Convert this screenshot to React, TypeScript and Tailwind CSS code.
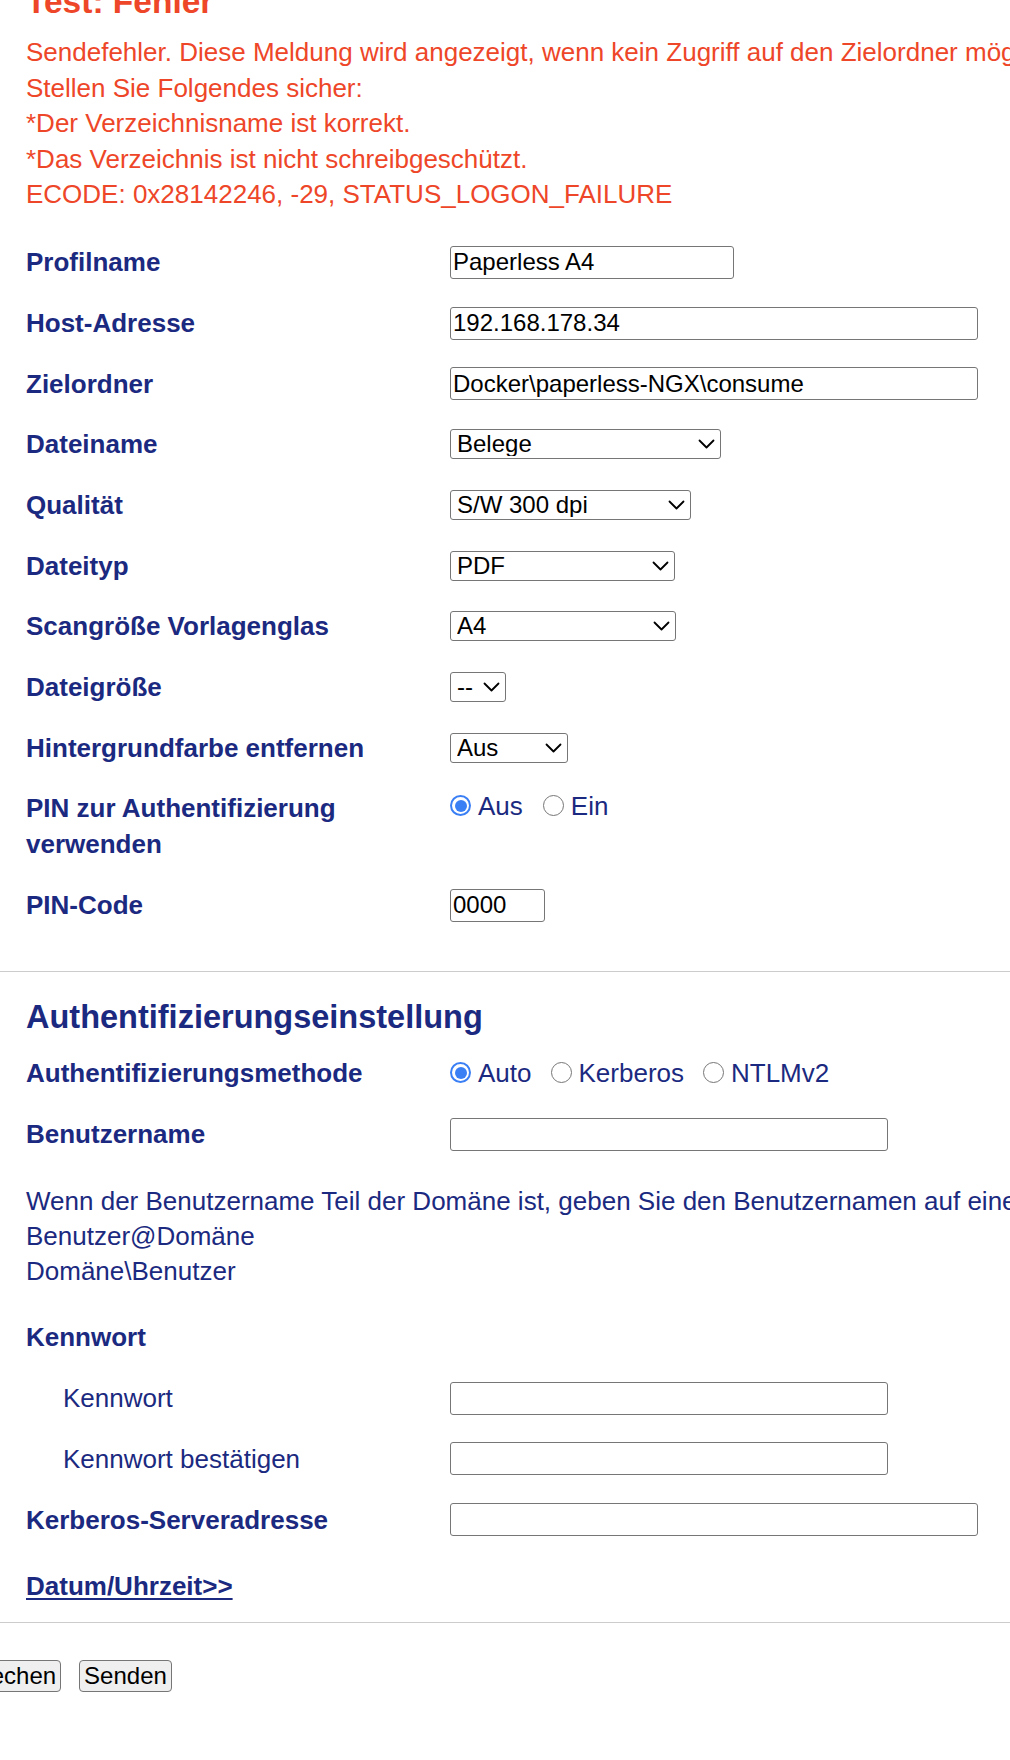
import React from 'react';

const blue = 'text-[#1b2a80]';

function Row({
  label,
  children,
  indent = false,
  bold = true,
}: {
  label: React.ReactNode;
  children?: React.ReactNode;
  indent?: boolean;
  bold?: boolean;
}) {
  return (
    <div className="flex items-center h-[60.7px]">
      <div
        className={`w-[424px] shrink-0 text-[26px] leading-[36px] ${blue} ${bold ? 'font-bold' : 'font-normal'} ${
          indent ? 'pl-[37px]' : ''
        }`}
      >
        {label}
      </div>
      <div className="flex items-center">{children}</div>
    </div>
  );
}

function TextInput({ width, value = '' }: { width: string; value?: string }) {
  return (
    <input
      type="text"
      defaultValue={value}
      className={`${width} h-[33px] border border-[#767676] rounded-[3px] bg-white px-[2px] py-0 text-[24px] leading-normal text-black outline-none`}
    />
  );
}

function Select({ width, value }: { width: string; value: string }) {
  return (
    <div className={`relative ${width} h-[30px]`}>
      <select
        defaultValue={value}
        className="appearance-none w-full h-full border border-[#767676] rounded-[3px] bg-white pl-[6px] pr-[24px] text-[24px] leading-none text-black outline-none"
      >
        <option>{value}</option>
      </select>
      {/* chevron */}
      <svg
        className="absolute right-[6px] top-1/2 -translate-y-1/2 w-[17px] h-[10px] pointer-events-none"
        viewBox="0 0 17 10"
        fill="none"
      >
        <path d="M1.5 1.5l7 7 7-7" stroke="#000" strokeWidth={1.8} strokeLinecap="round" strokeLinejoin="round" />
      </svg>
    </div>
  );
}

function Radio({ checked = false }: { checked?: boolean }) {
  if (checked) {
    return (
      <span className="w-[21px] h-[21px] rounded-full border-[2.5px] border-[#3b7ff5] bg-white flex items-center justify-center shrink-0">
        <span className="w-[12px] h-[12px] rounded-full bg-[#3b7ff5]" />
      </span>
    );
  }
  return <span className="w-[21px] h-[21px] rounded-full border-[1.5px] border-[#767676] bg-white shrink-0" />;
}

function RadioOption({ label, checked = false }: { label: string; checked?: boolean }) {
  return (
    <label className="flex items-center gap-[7px]">
      <Radio checked={checked} />
      <span className={`text-[26px] leading-[36px] ${blue}`}>{label}</span>
    </label>
  );
}

export default function App() {
  return (
    <div className="w-[1010px] h-[1760px] overflow-hidden bg-white font-['Liberation_Sans',Arial,Helvetica,sans-serif]">
      <div className="px-[26px]">
        <div className="mt-[-17px] text-[33.5px] leading-[38px] font-bold text-[#ee4628] whitespace-nowrap">Test: Fehler</div>

        {/* error message */}
        <div className="mt-[14px] text-[26px] leading-[35.5px] text-[#ee4628] whitespace-nowrap">
          <div>Sendefehler. Diese Meldung wird angezeigt, wenn kein Zugriff auf den Zielordner möglich ist.</div>
          <div>Stellen Sie Folgendes sicher:</div>
          <div>*Der Verzeichnisname ist korrekt.</div>
          <div>*Das Verzeichnis ist nicht schreibgeschützt.</div>
          <div>ECODE: 0x28142246, -29, STATUS_LOGON_FAILURE</div>
        </div>

        <div className="mt-[19.5px]">
          <Row label="Profilname">
            <TextInput width="w-[284px]" value="Paperless A4" />
          </Row>
          <Row label="Host-Adresse">
            <TextInput width="w-[528px]" value="192.168.178.34" />
          </Row>
          <Row label="Zielordner">
            <TextInput width="w-[528px]" value="Docker\paperless-NGX\consume" />
          </Row>
          <Row label="Dateiname">
            <Select width="w-[271px]" value="Belege" />
          </Row>
          <Row label="Qualität">
            <Select width="w-[241px]" value="S/W 300 dpi" />
          </Row>
          <Row label="Dateityp">
            <Select width="w-[225px]" value="PDF" />
          </Row>
          <Row label="Scangröße Vorlagenglas">
            <Select width="w-[226px]" value="A4" />
          </Row>
          <Row label="Dateigröße">
            <Select width="w-[56px]" value="--" />
          </Row>
          <Row label="Hintergrundfarbe entfernen">
            <Select width="w-[118px]" value="Aus" />
          </Row>

          <div className="flex items-start pt-[11.5px] pb-[13px]">
            <div className={`w-[424px] shrink-0 text-[26px] leading-[36px] font-bold ${blue}`}>
              PIN zur Authentifizierung
              <br />
              verwenden
            </div>
            <div className="flex items-center gap-[20px] h-[36px] mt-[-2px]">
              <RadioOption label="Aus" checked />
              <RadioOption label="Ein" />
            </div>
          </div>

          <Row label="PIN-Code">
            <TextInput width="w-[95px]" value="0000" />
          </Row>
        </div>
      </div>

      <div className="mt-[36px] h-px bg-[#cccccc]" />

      <div className="px-[26px]">
        <h2 className={`mt-[27px] text-[32.5px] leading-[37px] font-bold ${blue}`}>Authentifizierungseinstellung</h2>

        <div className="mt-[6px]">
          <Row label="Authentifizierungsmethode">
            <div className="flex items-center gap-[19px]">
              <RadioOption label="Auto" checked />
              <RadioOption label="Kerberos" />
              <RadioOption label="NTLMv2" />
            </div>
          </Row>
        </div>
        <div className="mt-[1px]">
          <Row label="Benutzername">
            <TextInput width="w-[438px]" />
          </Row>
        </div>

        <div className={`mt-[19.5px] text-[26px] leading-[35px] ${blue} whitespace-nowrap`}>
          <div>Wenn der Benutzername Teil der Domäne ist, geben Sie den Benutzernamen auf eine der folgenden Arten ein:</div>
          <div>Benutzer@Domäne</div>
          <div>Domäne\Benutzer</div>
        </div>

        <div className="mt-[17px]">
          <Row label="Kennwort" />
        </div>
        <div className="mt-[1px]">
          <Row label="Kennwort" indent bold={false}>
            <TextInput width="w-[438px]" />
          </Row>
          <Row label="Kennwort bestätigen" indent bold={false}>
            <TextInput width="w-[438px]" />
          </Row>
          <Row label="Kerberos-Serveradresse">
            <TextInput width="w-[528px]" />
          </Row>
        </div>

        <div className="mt-[18px] text-[26px] leading-[36px]">
          <a href="#" className={`font-bold ${blue} underline decoration-[2px] underline-offset-[3px]`}>
            Datum/Uhrzeit&gt;&gt;
          </a>
        </div>
      </div>

      <div className="mt-[18px] h-px bg-[#cccccc]" />

      <div className="mt-[37px] ml-[-65px] flex gap-[18px]">
        <button className="h-[32px] px-[4px] border border-[#767676] rounded-[4px] bg-[#efefef] text-[24px] leading-none text-black">
          Abbrechen
        </button>
        <button className="h-[32px] px-[4px] border border-[#767676] rounded-[4px] bg-[#efefef] text-[24px] leading-none text-black">
          Senden
        </button>
      </div>
    </div>
  );
}
